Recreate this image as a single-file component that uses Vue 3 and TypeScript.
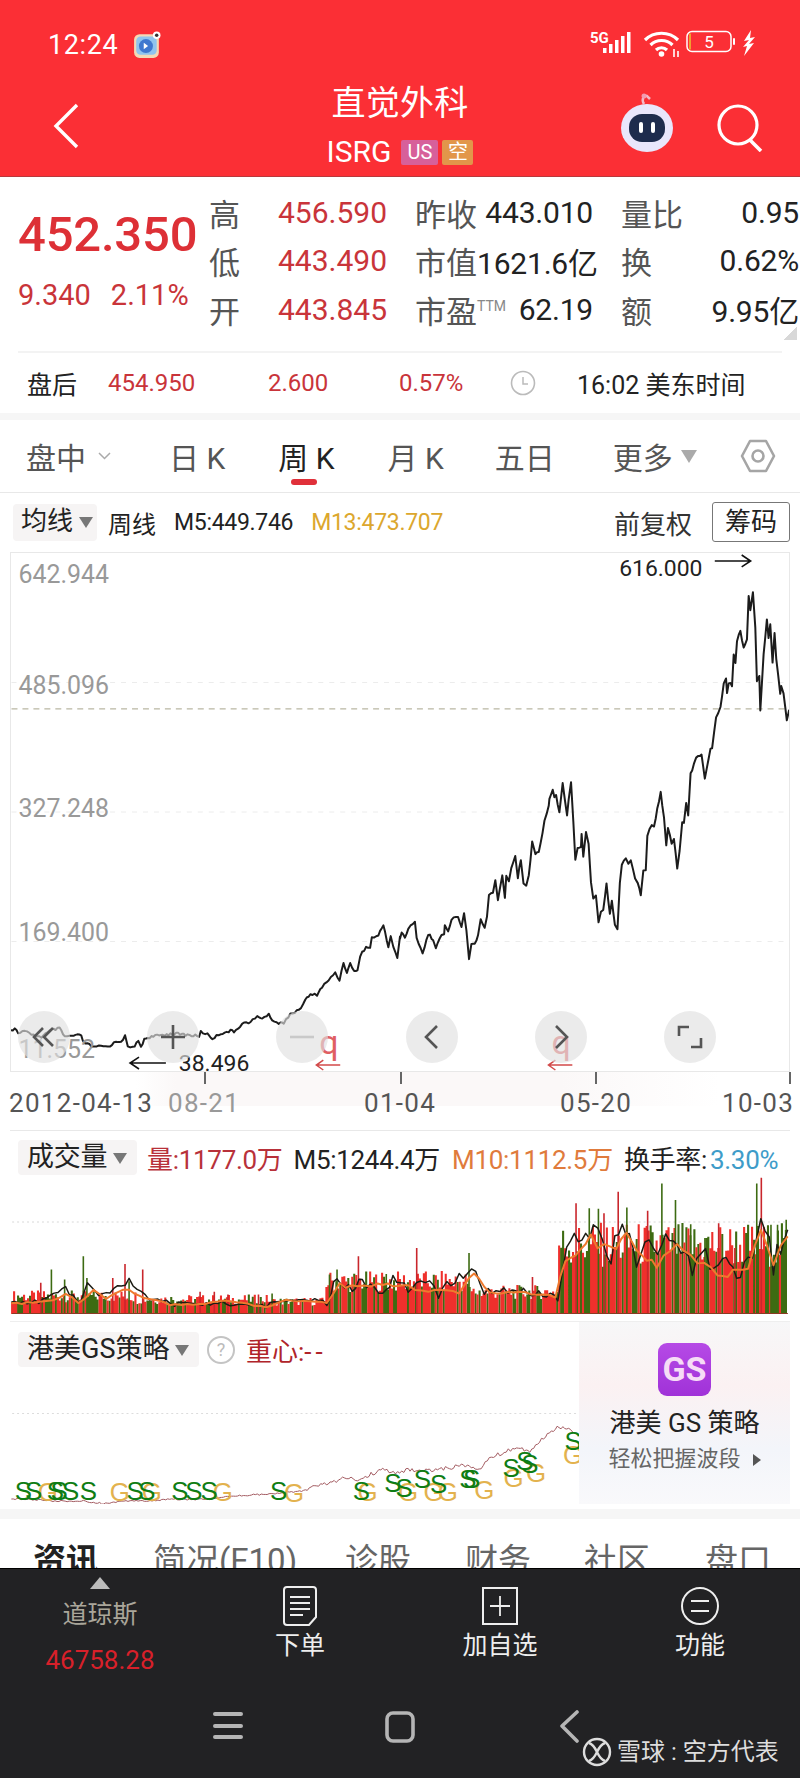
<template>
  <div class="page">
    <div class="red-head">
      <div class="status">
        <span class="time">12:24</span>
        <svg class="app-icon" width="28" height="28" viewBox="0 0 26 26">
          <rect x="1" y="3" width="23" height="22" rx="5" fill="#f3d9b5" />
          <rect x="3" y="5" width="19" height="17" rx="4" fill="#8fc4ee" />
          <circle cx="12" cy="14" r="6.5" fill="#3f78cf" />
          <path d="M10 11l4 3-4 3z" fill="#fff" />
          <circle cx="22" cy="4" r="3.5" fill="#fff" />
          <circle cx="22" cy="4" r="1.6" fill="#333" />
        </svg>
        <div class="status-right">
          <svg width="48" height="26" viewBox="0 0 48 26">
            <text x="0" y="13" class="five-g">5G</text>
            <g fill="#fff">
              <rect x="13" y="18" width="3.500" height="5" />
              <rect x="19" y="14" width="3.500" height="9" />
              <rect x="25" y="10" width="3.500" height="13" />
              <rect x="31" y="6" width="3.500" height="17" />
              <rect x="37" y="2" width="3.500" height="21" />
            </g>
          </svg>
          <svg width="38" height="28" viewBox="0 0 38 28">
            <g fill="none" stroke="#fff" stroke-width="3.200">
              <path d="M2 10c9-9 24-9 33 0" />
              <path d="M7.500 15c6-6 16-6 22 0" />
              <path d="M13 20c3-3 8-3 11 0" />
            </g>
            <circle cx="18.500" cy="24" r="2.800" fill="#fff" />
            <path d="M31 19v8M35 21v6" stroke="#fff" stroke-width="1.600" />
          </svg>
          <svg width="50" height="24" viewBox="0 0 50 24">
            <rect x="1" y="1.500" width="44" height="20" rx="5" fill="none" stroke="#fff" stroke-width="1.500" />
            <rect x="3" y="3.500" width="2" height="16" fill="#f0a030" />
            <text x="23" y="18" text-anchor="middle" class="batt">5</text>
            <rect x="47" y="8" width="2" height="7" rx="1" fill="#fff" />
          </svg>
          <svg width="16" height="26" viewBox="0 0 16 26">
            <path d="M10 0L3 11l5-1-6 7 4-1-3 10 10-13-5 1 6-7-5 1z" fill="#fff" />
          </svg>
        </div>
      </div>
      <div class="nav-head">
        <div class="head-left">
          <svg width="28" height="46" viewBox="0 0 28 46">
            <path d="M25 2L4 23l21 21" fill="none" stroke="#fff" stroke-width="3.400" />
          </svg>
        </div>
        <div class="head-mid">
          <div class="title">直觉外科</div>
          <div class="sub-title">
            <span>ISRG</span>
            <i class="tag tag-us">US</i>
            <i class="tag tag-kong">空</i>
          </div>
        </div>
        <div class="head-right">
          <svg width="54" height="62" viewBox="0 0 54 62">
            <path d="M24 12c-3-5 0-9 3-8l3 3" fill="none" stroke="#f3b8c8" stroke-width="2.500" />
            <circle cx="24" cy="4" r="2.500" fill="#f29ab0" />
            <ellipse cx="27" cy="36" rx="26" ry="24" fill="#e9e6fb" />
            <rect x="9" y="22" width="36" height="28" rx="13" fill="#1e2c4d" />
            <rect x="19" y="30" width="4" height="11" rx="2" fill="#fff" />
            <rect x="31" y="30" width="4" height="11" rx="2" fill="#fff" />
          </svg>
          <svg class="search" width="48" height="48" viewBox="0 0 48 48">
            <circle cx="22" cy="21" r="19" fill="none" stroke="#fff" stroke-width="3.200" />
            <path d="M34 36l11 11" stroke="#fff" stroke-width="3.600" />
          </svg>
        </div>
      </div>
    </div>

    <div class="quote">
      <div class="last-box">
        <div class="last">452.350</div>
        <div class="change"><span>9.340</span><span>2.11%</span></div>
      </div>
      <div class="stats">
        <div v-for="s in stats" :key="s.label" class="stat">
          <span class="stat-label">{{ s.label }}<sup v-if="s.sup">{{ s.sup }}</sup></span>
          <span :class="s.red ? 'val-red' : 'val-dark'">{{ s.value }}</span>
        </div>
      </div>
      <div class="corner"></div>
    </div>
    <div class="after">
      <span class="after-label">盘后</span>
      <span class="after-a">454.950</span>
      <span class="after-b">2.600</span>
      <span class="after-c">0.57%</span>
      <svg class="clock" width="26" height="26" viewBox="0 0 26 26">
        <circle cx="13" cy="13" r="11.500" fill="none" stroke="#bbb" stroke-width="1.600" />
        <path d="M13 7v7h5" fill="none" stroke="#bbb" stroke-width="1.500" />
      </svg>
      <span class="after-time">16:02 美东时间</span>
    </div>
    <div class="gap"></div>

    <div class="period-tabs">
      <span class="p-tab p1">盘中</span>
      <svg class="p-chev" width="13" height="8" viewBox="0 0 13 8"><path d="M1 1l5.500 5.500L12 1" fill="none" stroke="#aaa" stroke-width="1.500" /></svg>
      <span class="p-tab p2">日 K</span>
      <span class="p-tab p3">周 K<b class="under"></b></span>
      <span class="p-tab p4">月 K</span>
      <span class="p-tab p5">五日</span>
      <span class="p-tab p6">更多</span>
      <i class="tri tri-more"></i>
      <svg class="hex" width="36" height="36" viewBox="0 0 36 36">
        <path d="M10 3h16l8 15-8 15H10L2 18z" fill="none" stroke="#a5a5a5" stroke-width="2.600" stroke-linejoin="round" />
        <circle cx="18" cy="18" r="5.500" fill="none" stroke="#a5a5a5" stroke-width="2.600" />
      </svg>
    </div>

    <div class="chart-bar">
      <div class="pill pill-ma">均线<i class="tri"></i></div>
      <span class="ma-name">周线</span>
      <span class="ma-five">M5:449.746</span>
      <span class="ma-thirteen">M13:473.707</span>
      <span class="adjust">前复权</span>
      <span class="chips">筹码</span>
    </div>

    <div class="main-chart">
      <svg class="fill-svg" viewBox="10 551 780 520">
        <path d="M10 681H790M10 811H790M10 941H790" stroke="#ececec" stroke-dasharray="5 6" fill="none" />
        <path d="M10 707.500H790" stroke="#a8a58c" stroke-dasharray="6 5" fill="none" />
        <path :d="pricePath" fill="none" stroke="#1c1c1c" stroke-width="2" stroke-linejoin="round" />
        <text x="17" y="581" class="axis-y">642.944</text>
        <text x="17" y="693" class="axis-y">485.096</text>
        <text x="17" y="816" class="axis-y">327.248</text>
        <text x="17" y="941" class="axis-y">169.400</text>
        <text x="17" y="1058" class="axis-y">11.552</text>
        <text x="620" y="574" class="mark">616.000</text>
        <path d="M716 559H752M743 553l9 6-9 6" fill="none" stroke="#111" stroke-width="1.600" />
        <text x="178" y="1071" class="mark">38.496</text>
        <path d="M165 1063H129M138 1057l-9 6 9 6" fill="none" stroke="#111" stroke-width="1.600" />
        <text x="319" y="1054" class="mark-q">q</text>
        <path d="M340 1065H316M323 1060l-7 5 7 5" fill="none" stroke="#d24a4a" stroke-width="1.500" />
        <text x="552" y="1054" class="mark-q">q</text>
        <path d="M573 1065H549M556 1060l-7 5 7 5" fill="none" stroke="#d24a4a" stroke-width="1.500" />
      </svg>
      <button v-for="b in chartButtons" :key="b.name" class="round-btn">
        <svg width="30" height="30" viewBox="0 0 30 30">
          <path :d="b.d" fill="none" :stroke="b.color" stroke-width="2.600" />
        </svg>
      </button>
    </div>

    <div class="axis-x">
      <span class="d1">2012-04-13</span>
      <span class="d2">08-21</span>
      <span class="d3">01-04</span>
      <span class="d3">05-20</span>
      <span class="d3">10-03</span>
      <i class="tick t1"></i><i class="tick t2"></i><i class="tick t3"></i><i class="tick t4"></i>
    </div>

    <div class="vol-box">
      <svg class="fill-svg" viewBox="10 1129 780 184">
        <path d="M10 1220.500H790" stroke="#d8d8d8" stroke-dasharray="2 3" fill="none" />
        <path :d="volGreen" stroke="#3d6b12" stroke-width="2.100" fill="none" />
        <path :d="volRed" stroke="#ef302c" stroke-width="2.100" fill="none" />
        <path :d="volSpikeGreen" stroke="#3d6b12" stroke-width="1.600" fill="none" />
        <path :d="volSpikeRed" stroke="#c9262c" stroke-width="1.600" fill="none" />
        <path d="M10 1312.500H790" stroke="#8a3a24" fill="none" />
        <path :d="maBlack" stroke="#1c1c14" stroke-width="1.500" fill="none" stroke-linejoin="round" />
        <path :d="maOrange" stroke="#ee7a2e" stroke-width="2" fill="none" stroke-linejoin="round" />
      </svg>
      <div class="legend">
        <div class="pill pill-vol">成交量<i class="tri"></i></div>
        <span class="l-red">量:1177.0万</span>
        <span class="l-dark">M5:1244.4万</span>
        <span class="l-orange">M10:1112.5万</span>
        <span class="l-dark">换手率:<em>3.30%</em></span>
      </div>
    </div>

    <div class="gs-box">
      <svg class="fill-svg" viewBox="10 1320 780 183">
        <path d="M10 1412H790" stroke="#dcdcdc" stroke-dasharray="2 3" fill="none" />
        <path :d="gsPath" stroke="#a25a60" stroke-width="1" fill="none" />
        <text v-for="(g, i) in gsG" :key="'g' + i" :x="g[0]" :y="g[1]" class="sig-g" text-anchor="middle">G</text>
        <text v-for="(s, i) in gsS" :key="'s' + i" :x="s[0]" :y="s[1]" class="sig-s" text-anchor="middle">S</text>
      </svg>
      <div class="legend">
        <div class="pill pill-gs">港美GS策略<i class="tri"></i></div>
        <span class="help">?</span>
        <span class="l-center">重心:<b>--</b></span>
      </div>
      <aside class="promo">
        <div class="promo-logo">GS</div>
        <div class="promo-title">港美 GS 策略</div>
        <div class="promo-sub">轻松把握波段<i class="tri-right"></i></div>
      </aside>
    </div>
    <div class="gap gap-low"></div>

    <div class="info-tabs">
      <span class="active">资讯</span>
      <span>简况(F10)</span>
      <span>诊股</span>
      <span>财务</span>
      <span>社区</span>
      <span>盘口</span>
    </div>

    <footer class="foot">
      <div class="foot-grid">
        <div class="foot-cell index-cell">
          <i class="up"></i>
          <span class="dow">道琼斯</span>
          <span class="dow-num">46758.28</span>
        </div>
        <div class="foot-cell">
          <svg width="38" height="42" viewBox="0 0 38 42">
            <path d="M6 2h26q3 0 3 3v27l-7 8H6q-3 0-3-3V5q0-3 3-3z" fill="none" stroke="#eee" stroke-width="2" />
            <path d="M9 12h20M9 18h20M9 24h20M9 30h13" stroke="#eee" stroke-width="1.800" />
          </svg>
          <span class="foot-label">下单</span>
        </div>
        <div class="foot-cell">
          <svg width="38" height="42" viewBox="0 0 38 42">
            <rect x="2" y="3" width="34" height="36" fill="none" stroke="#eee" stroke-width="2" />
            <path d="M19 11v20M9 21h20" stroke="#eee" stroke-width="1.800" />
          </svg>
          <span class="foot-label">加自选</span>
        </div>
        <div class="foot-cell">
          <svg width="38" height="42" viewBox="0 0 38 42">
            <circle cx="19" cy="21" r="18" fill="none" stroke="#eee" stroke-width="2" />
            <path d="M10 16h18M10 26h18" stroke="#eee" stroke-width="1.800" />
          </svg>
          <span class="foot-label">功能</span>
        </div>
      </div>
      <div class="sys-nav">
        <svg width="32" height="32" viewBox="0 0 32 32">
          <path d="M3 4h26M3 16h26M3 27h26" stroke="#b5b5b5" stroke-width="4" stroke-linecap="round" />
        </svg>
        <svg width="32" height="34" viewBox="0 0 32 34">
          <rect x="3" y="3" width="26" height="28" rx="6" fill="none" stroke="#b5b5b5" stroke-width="3.600" />
        </svg>
        <svg width="32" height="34" viewBox="0 0 32 34">
          <path d="M21 2L6 16l15 15" fill="none" stroke="#b5b5b5" stroke-width="3.600" stroke-linecap="round" stroke-linejoin="round" />
        </svg>
      </div>
      <div class="watermark">
        <svg width="30" height="30" viewBox="0 0 30 30">
          <circle cx="15" cy="15" r="13" fill="none" stroke="#ddd" stroke-width="2.400" />
          <path d="M7 6c9 3 7 15 16 18M23 6C14 9 16 21 7 24" fill="none" stroke="#ddd" stroke-width="2.400" />
        </svg>
        <span>雪球 : 空方代表</span>
      </div>
    </footer>
  </div>
</template>

<script setup lang="ts">
type Pt = number[]

const stats = [
  { label: '高', value: '456.590', red: true },
  { label: '昨收', value: '443.010' },
  { label: '量比', value: '0.95' },
  { label: '低', value: '443.490', red: true },
  { label: '市值', value: '1621.6亿' },
  { label: '换', value: '0.62%' },
  { label: '开', value: '443.845', red: true },
  { label: '市盈', sup: 'TTM', value: '62.19' },
  { label: '额', value: '9.95亿' },
]

const chartButtons = [
  { name: 'first', color: '#555', d: 'M14 6l-9 9 9 9M24 6l-9 9 9 9' },
  { name: 'plus', color: '#555', d: 'M15 3v24M3 15h24' },
  { name: 'minus', color: '#c9c9c9', d: 'M3 15h24' },
  { name: 'prev', color: '#555', d: 'M20 4L9 15l11 11' },
  { name: 'next', color: '#555', d: 'M10 4l11 11-11 11' },
  { name: 'full', color: '#555', d: 'M4 14V5h10M26 16v9H16' },
]

const toPath = (pts: Pt[]) => pts.map((p, i) => (i ? 'L' : 'M') + p[0].toFixed(1) + ' ' + p[1].toFixed(1)).join('')

const rnd = (i: number) => {
  const v = Math.sin(i * 12.9898) * 43758.5453
  return v - Math.floor(v)
}

// fill in a hand-read curve with small steps so it looks like real ticks
const wobble = (pts: Pt[], step: number, amp: (x: number) => number, seed: number) => {
  const out: Pt[] = []
  let n = seed
  for (let i = 0; i < pts.length - 1; i++) {
    const [x0, y0] = pts[i]
    const [x1, y1] = pts[i + 1]
    const parts = Math.max(1, Math.round((x1 - x0) / step))
    for (let k = 0; k < parts; k++) {
      const t = k / parts
      const x = x0 + (x1 - x0) * t
      out.push([x, y0 + (y1 - y0) * t + (rnd(n++) - 0.5) * amp(x)])
    }
  }
  out.push(pts[pts.length - 1])
  return out
}

// weekly close, read off the picture
const leftPts: Pt[] = [[28,570],[40,565],[50,578],[70,572],[90,585],[120,590],[150,570],[175,565],[190,590],[205,588],[240,585],[245,605],[265,615],[280,622],[300,618],[320,620],[345,605],[360,603],[372,588],[380,622],[395,622],[412,605],[420,620],[430,597],[440,592],[480,585],[520,580],[595,588],[600,575],[620,582],[635,595],[660,580],[690,572],[700,575],[725,550],[750,545],[770,530],[785,533],[805,524],[815,538],[835,550],[850,547],[870,520],[895,512],[915,478],[930,464],[950,463],[965,440],[985,420],[1005,397],[1018,420],[1030,365],[1040,398],[1050,370],[1062,390],[1072,392],[1080,345],[1098,320],[1110,322],[1115,292],[1135,285],[1150,252],[1165,320],[1172,285],[1180,320],[1192,352],[1200,290]]
const rightPts: Pt[] = [[0,1135],[5,1115],[15,1130],[25,1105],[45,1085],[50,1130],[68,1178],[85,1122],[100,1135],[108,1160],[125,1125],[133,1120],[135,1098],[145,1108],[155,1078],[175,1068],[185,1100],[193,1060],[200,1110],[208,1198],[215,1150],[225,1150],[235,1125],[243,1078],[255,1105],[262,1070],[268,1005],[280,993],[287,958],[295,1020],[308,945],[316,1010],[320,945],[328,958],[335,920],[347,887],[355,948],[364,900],[372,965],[380,978],[388,945],[398,842],[408,878],[418,875],[435,780],[448,735],[450,715],[460,682],[465,712],[470,705],[480,750],[490,662],[503,765],[508,715],[515,665],[522,780],[528,895],[535,860],[545,855],[547,820],[552,885],[560,810],[568,850],[575,960],[582,1015],[590,1000],[598,1085],[605,1050],[612,1045],[622,970],[632,1060],[638,1020],[647,1095],[655,1108],[662,965],[668,910],[680,890],[688,910],[695,900],[708,950],[716,965],[725,1005],[733,930],[740,925],[745,825],[758,790],[765,800],[775,745],[785,690],[795,770],[802,850],[807,800],[818,845],[825,835],[835,920],[842,870],[850,780],[855,790],[862,730],[868,765],[875,640],[885,610],[892,585],[908,580],[918,655],[935,565],[940,560],[952,465],[965,440],[975,365],[982,350],[985,395],[990,365],[1000,372],[1005,275],[1010,305],[1015,240],[1025,205],[1035,260],[1045,230],[1050,100],[1055,145],[1063,90],[1070,200],[1075,360],[1082,345],[1085,445],[1090,370],[1095,280],[1105,170],[1110,225],[1115,185],[1122,300],[1128,218],[1133,295],[1145,395],[1148,378],[1155,395],[1165,475],[1172,445]]
const pricePath = toPath(wobble([
  ...leftPts.map(p => [p[0] / 3, 840 + p[1] / 3]),
  ...rightPts.map(p => [400 + p[0] / 3, 560 + p[1] / 3]),
], 2, x => (x < 400 ? 2.5 : 3), 40))

// wide crops were read at 1.96 horizontally and 3 vertically
const volPt = (p: Pt) => [p[0] / 1.96, 1120 + p[1] / 3]
const gsPt = (p: Pt) => [p[0] / 1.96, 1320 + p[1] / 3]

const volBase = (x: number) => {
  if (x < 135) return 17
  if (x < 270) return 14
  if (x < 326) return 12
  if (x < 470) return 31
  if (x < 559) return 21
  return 66
}
let redBars = ''
let greenBars = ''
for (let i = 0, x = 10; x < 790; i++, x += 2) {
  const h = volBase(x) * (0.7 + rnd(i) * 0.7)
  const seg = 'M' + x + ' 1313V' + (1313 - h).toFixed(1)
  if (rnd(i + 500) > 0.4) redBars += seg
  else greenBars += seg
}
const volRed = redBars
const volGreen = greenBars

const spikesRed: Pt[] = [[76,485],[218,470],[242,428],[277,445],[390,512],[418,512],[445,520],[505,520],[702,405],[817,380],[1045,467],[1131,245],[1186,275],[1214,210],[1272,268],[1412,305],[1444,380],[1496,168]]
const spikesGreen: Pt[] = [[97,445],[123,475],[160,405],[167,470],[250,480],[532,517],[645,460],[660,445],[757,458],[920,395],[1157,260],[1175,262],[1231,258],[1300,185],[1327,235],[1357,308],[1385,350],[1487,185],[1515,310],[1528,310],[1545,295]]
const spikePath = (list: Pt[]) => list.map(p => {
  const q = volPt(p)
  return 'M' + q[0].toFixed(1) + ' 1313V' + q[1].toFixed(1)
}).join('')
const volSpikeRed = spikePath(spikesRed)
const volSpikeGreen = spikePath(spikesGreen)

const maOrange = toPath(wobble(([[18,548],[60,545],[100,538],[125,515],[150,545],[180,510],[205,530],[225,512],[250,505],[280,530],[330,550],[400,548],[450,538],[520,558],[560,538],[640,542],[665,490],[700,500],[740,490],[770,490],[800,498],[840,512],[900,510],[930,460],[960,512],[1020,515],[1090,525],[1110,430],[1130,400],[1160,355],[1200,390],[1230,345],[1260,410],[1290,430],[1330,378],[1370,420],[1410,455],[1440,460],[1470,440],[1495,325],[1520,420],[1548,345]] as Pt[]).map(volPt), 6, x => volBase(x) * 0.16, 900))
const maBlack = toPath(wobble(([[18,545],[80,540],[125,505],[155,545],[168,480],[190,530],[250,480],[290,530],[340,550],[410,545],[520,555],[560,535],[640,540],[660,470],[690,505],[710,480],[750,510],[770,470],[800,505],[825,470],[860,515],[925,435],[950,512],[1020,510],[1095,530],[1105,410],[1135,330],[1150,370],[1165,315],[1200,395],[1222,295],[1250,410],[1300,360],[1330,345],[1360,430],[1395,410],[1420,405],[1440,470],[1470,440],[1495,280],[1520,430],[1548,325]] as Pt[]).map(volPt), 4, x => volBase(x) * 0.35, 1300))

const gsPath = toPath(wobble(([[18,533],[60,535],[100,540],[160,540],[200,548],[240,540],[280,540],[330,535],[400,535],[460,525],[530,518],[590,510],[620,495],[650,485],[675,470],[700,475],[750,445],[775,458],[800,445],[850,450],[905,432],[940,445],[960,410],[985,395],[1010,380],[1040,390],[1055,365],[1090,320],[1105,315],[1135,340]] as Pt[]).map(gsPt), 2, x => (x < 300 ? 1.5 : 4), 1700))

const sigY = 9
const gsS = ([[42,510],[62,510],[105,510],[112,510],[135,510],[170,510],[262,510],[285,510],[350,510],[378,510],[408,510],[545,510],[708,510],[770,487],[792,500],[828,475],[860,490],[918,475],[925,475],[1003,440],[1030,420],[1040,430],[1125,360]] as Pt[]).map(p => {
  const q = gsPt(p)
  return [q[0], q[1] + sigY]
})
const gsG = ([[90,512],[232,512],[295,512],[435,512],[575,515],[720,512],[800,512],[850,512],[878,512],[950,508],[1008,470],[1052,455],[1125,400]] as Pt[]).map(p => {
  const q = gsPt(p)
  return [q[0], q[1] + sigY]
})
</script>

<style>
html, body { margin: 0; background: #fff; }
</style>

<style scoped>
.page {
  width: 800px;
  height: 1778px;
  overflow: hidden;
  display: flex;
  flex-direction: column;
  background: #fff;
  font-family: Roboto, "Noto Sans CJK SC", sans-serif;
  color: #222;
}
i { font-style: normal; }
.red-head {
  height: 177px;
  flex: none;
  box-sizing: border-box;
  background: #fb2f35;
  border-bottom: 1px solid #b8383b;
  color: #fff;
}
.status {
  height: 66px;
  padding: 24px 43px 0 48px;
  box-sizing: border-box;
  display: flex;
  align-items: flex-start;
}
.time { font-size: 27px; line-height: 42px; letter-spacing: 0.6px; }
.app-icon { margin: 7px 0 0 15px; }
.status-right { margin-left: auto; display: flex; align-items: flex-start; gap: 5px; margin-top: 6px; }
.five-g { font: 700 15px Roboto, sans-serif; fill: #fff; }
.batt { font: 400 17px Roboto, sans-serif; fill: #fff; }
.nav-head {
  height: 110px;
  display: grid;
  grid-template-columns: 1fr auto 1fr;
  align-items: start;
}
.head-left { padding: 37px 0 0 52px; }
.head-mid { text-align: center; }
.title { font-size: 34px; line-height: 48px; margin-top: 13px; letter-spacing: 0.3px; }
.sub-title { display: flex; align-items: center; justify-content: center; gap: 4px; font-size: 30px; line-height: 38px; margin-top: 6px; }
.sub-title span { margin-right: 6px; }
.tag { display: block; height: 25px; line-height: 25px; font-size: 20px; text-align: center; border-radius: 2px; }
.tag-us { width: 37px; background: #d7609a; }
.tag-kong { width: 31px; background: #e2964a; }
.head-right { display: flex; justify-content: flex-end; padding: 26px 36px 0 0; gap: 42px; }
.search { margin-top: 12px; }

.quote {
  position: relative;
  height: 174px;
  flex: none;
  display: flex;
  box-sizing: border-box;
  padding-top: 11px;
}
.last-box { width: 209px; padding-left: 18px; box-sizing: border-box; }
.last { font-size: 49px; line-height: 58px; margin-top: 18px; font-weight: 500; color: #dd3036; letter-spacing: -0.2px; }
.change { display: flex; gap: 20px; font-size: 29px; line-height: 36px; margin-top: 13px; color: #c93439; }
.stats {
  display: grid;
  grid-template-columns: repeat(3, 178px);
  grid-auto-rows: 48.500px;
  column-gap: 28px;
}
.stat { display: flex; justify-content: space-between; align-items: center; white-space: nowrap; }
.stat-label { font-size: 31px; color: #555; }
.stat-label sup { font-size: 14px; color: #888; vertical-align: 12px; line-height: 0; }
.val-red { font-size: 30px; color: #c9343a; }
.val-dark { font-size: 30px; color: #222; letter-spacing: -0.2px; }
.corner {
  position: absolute;
  right: 3px;
  bottom: 11px;
  width: 14px;
  height: 13px;
  background: linear-gradient(135deg, transparent 50%, #d8d8d8 50%);
}
.after {
  height: 62px;
  flex: none;
  margin: 0 18px;
  border-top: 2px solid #f3f3f3;
  position: relative;
  display: grid;
  grid-template-columns: 90px 160px 131px 111px 67px auto;
  align-items: center;
  font-size: 24px;
  box-sizing: border-box;
}
.after-label { padding-left: 9px; font-size: 25px; }
.after-a, .after-b, .after-c { color: #c9343a; }
.after-time { font-size: 25px; white-space: nowrap; }
.gap { height: 7px; flex: none; background: #f6f6f6; }

.period-tabs {
  height: 73px;
  flex: none;
  box-sizing: border-box;
  border-bottom: 1px solid #e8e8e8;
  display: flex;
  padding-left: 26px;
  align-items: center;
  font-size: 30px;
  color: #555;
  white-space: nowrap;
}
.p-tab { flex: none; }
.p-chev { margin-left: 12px; }
.p2 { margin-left: 58px; }
.p3 { margin-left: 53px; color: #222; position: relative; }
.p4 { margin-left: 53px; }
.p5 { margin-left: 51px; }
.p6 { margin-left: 58px; }
.under { position: absolute; left: 13px; top: 45px; width: 26px; height: 6px; border-radius: 3px; background: #e0303a; }
.tri { display: inline-block; width: 0; height: 0; border: 7px solid transparent; border-top: 11px solid #777; border-bottom: 0; margin-left: 6px; vertical-align: middle; }
.tri-more { border-top-color: #aaa; border-left-width: 8px; border-right-width: 8px; border-top-width: 13px; margin-left: 8px; }
.hex { margin-left: 43px; }

.chart-bar {
  height: 58px;
  flex: none;
  display: flex;
  align-items: center;
  padding: 0 10px 0 13px;
  font-size: 23px;
  white-space: nowrap;
}
.pill { background: #f6f4f4; border-radius: 4px; box-sizing: border-box; color: #222; white-space: nowrap; flex: none; }
.pill-ma { width: 84px; height: 37px; line-height: 35px; font-size: 26px; padding-left: 8px; }
.ma-name { margin-left: 11px; font-size: 24px; }
.ma-five { margin-left: 18px; letter-spacing: -0.3px; }
.ma-thirteen { margin-left: 18px; color: #dca72e; letter-spacing: -0.3px; }
.adjust { margin-left: auto; font-size: 26px; color: #333; }
.chips { margin-left: 20px; width: 78px; height: 40px; line-height: 38px; text-align: center; font-size: 26px; border: 1px solid #777; border-radius: 3px; box-sizing: border-box; }

.main-chart {
  position: relative;
  height: 520px;
  flex: none;
  margin: 1px 10px 0;
  box-sizing: border-box;
  border: 1px solid #e8e8e8;
  display: flex;
  justify-content: space-between;
  align-items: flex-end;
  padding: 0 73px 8px 7px;
  width: 780px;
}
.fill-svg { position: absolute; left: 0; top: 0; width: 100%; height: 100%; display: block; }
.axis-y { font: 400 25px Roboto, sans-serif; fill: #999; }
.mark { font: 400 23px Roboto, sans-serif; fill: #222; }
.mark-q { font: 400 34px Roboto, sans-serif; fill: #d8383c; opacity: 0.8; }
.round-btn {
  position: relative;
  width: 52px;
  height: 52px;
  padding: 0;
  flex: none;
  border: 0;
  border-radius: 50%;
  background: rgba(224, 224, 224, 0.65);
  display: flex;
  align-items: center;
  justify-content: center;
}

.axis-x {
  position: relative;
  height: 58px;
  flex: none;
  padding-left: 9px;
  display: grid;
  grid-template-columns: 159px 196px 196px 162px auto;
  align-items: center;
  font-size: 26px;
  letter-spacing: 1.300px;
  color: #555;
  white-space: nowrap;
  padding-top: 3px;
  box-sizing: border-box;
  background: linear-gradient(90deg, #fff 17%, #fbf8f8 22%, #fbf8f8 70%, #fff 90%) 0 0 / 100% 34px no-repeat;
}
.d2 { color: #999; }
.tick { position: absolute; top: 0; width: 1.500px; height: 12px; background: #666; }
.t1 { left: 204px; }
.t2 { left: 400px; }
.t3 { left: 595px; }
.t4 { left: 789px; }

.vol-box {
  position: relative;
  height: 184px;
  flex: none;
  margin: 0 10px;
  width: 780px;
  box-sizing: border-box;
  border-top: 1px solid #e8e8e8;
}
.legend { position: relative; display: flex; align-items: center; padding: 8px 0 0 8px; font-size: 26px; white-space: nowrap; }
.pill-vol { width: 119px; height: 35px; line-height: 34px; font-size: 27px; padding-left: 9px; margin-right: 10px; }
.l-red { color: #b8313a; margin-right: 11px; }
.l-dark { color: #222; margin-right: 12px; }
.l-orange { color: #e07b3c; margin-right: 11px; }
.legend em { font-style: normal; color: #3e9cc9; margin-left: 3px; }
.vol-box .legend { letter-spacing: -0.3px; }

.gs-box {
  position: relative;
  height: 183px;
  flex: none;
  margin: 7px 10px 0;
  width: 780px;
  box-sizing: border-box;
  overflow: hidden;
  border-top: 1px solid #eee;
}
.gs-box .legend { padding-top: 9px; }
.sig-s { font: 400 26px "Liberation Sans", sans-serif; fill: #0f7d14; }
.sig-g { font: 400 26px "Liberation Sans", sans-serif; fill: #e3b24e; }
.pill-gs { width: 181px; height: 35px; line-height: 34px; font-size: 27px; padding-left: 9px; }
.help { width: 24px; height: 24px; line-height: 23px; margin-left: 8px; text-align: center; border: 2px solid #c4c4c4; border-radius: 50%; color: #bbb; font-size: 18px; }
.l-center { margin-left: 11px; color: #b0242a; }
.l-center b { font-weight: 400; letter-spacing: 4px; }
.promo {
  position: absolute;
  right: 0;
  top: 0;
  width: 211px;
  height: 100%;
  background: linear-gradient(180deg, #f7f7f8 0%, #fbf1f2 35%, #f3f5fa 70%, #f9f9fb 100%);
  display: flex;
  flex-direction: column;
  align-items: center;
}
.promo-logo {
  width: 53px;
  height: 53px;
  margin-top: 21px;
  border-radius: 9px;
  background: linear-gradient(180deg, #b64ae6, #a032d8);
  color: #f6dcf6;
  font-size: 34px;
  font-weight: 700;
  line-height: 53px;
  text-align: center;
}
.promo-title { font-size: 26px; line-height: 36px; margin-top: 9px; white-space: nowrap; }
.promo-sub { font-size: 22px; line-height: 32px; margin-top: 2px; color: #666; white-space: nowrap; }
.tri-right { display: inline-block; width: 0; height: 0; border: 6px solid transparent; border-left: 8px solid #555; border-right: 0; margin-left: 12px; }
.gap-low { height: 10px; margin-top: 5px; }

.info-tabs {
  height: 49px;
  flex: none;
  overflow: hidden;
  display: grid;
  grid-template-columns: 120px 192px 120px 119px 121px auto;
  padding: 18px 0 0 33px;
  box-sizing: border-box;
  font-size: 33px;
  line-height: 48px;
  color: #666;
  white-space: nowrap;
}
.info-tabs .active { color: #222; font-weight: 700; }

.foot {
  position: relative;
  flex: 1;
  background: #222224;
  border-top: 1px solid #000;
  color: #eee;
}
.foot-grid { display: grid; grid-template-columns: repeat(4, 200px); height: 126px; }
.foot-cell { display: flex; flex-direction: column; align-items: center; padding-top: 16px; box-sizing: border-box; }
.foot-label { font-size: 25px; line-height: 34px; margin-top: 2px; }
.index-cell { padding-top: 8px; }
.up { width: 0; height: 0; border: 10px solid transparent; border-bottom: 12px solid #bbb; border-top: 0; }
.dow { font-size: 25px; line-height: 36px; margin-top: 8px; color: #aaa69a; }
.dow-num { font-size: 26px; line-height: 36px; margin-top: 9px; color: #d8202a; }
.sys-nav { display: grid; grid-template-columns: 172px 172px 172px; justify-content: center; justify-items: center; padding-top: 15px; }
.watermark {
  position: absolute;
  left: 582px;
  top: 168px;
  display: flex;
  align-items: center;
  gap: 5px;
  font-size: 24px;
  line-height: 30px;
  color: #ddd;
  white-space: nowrap;
}
</style>
